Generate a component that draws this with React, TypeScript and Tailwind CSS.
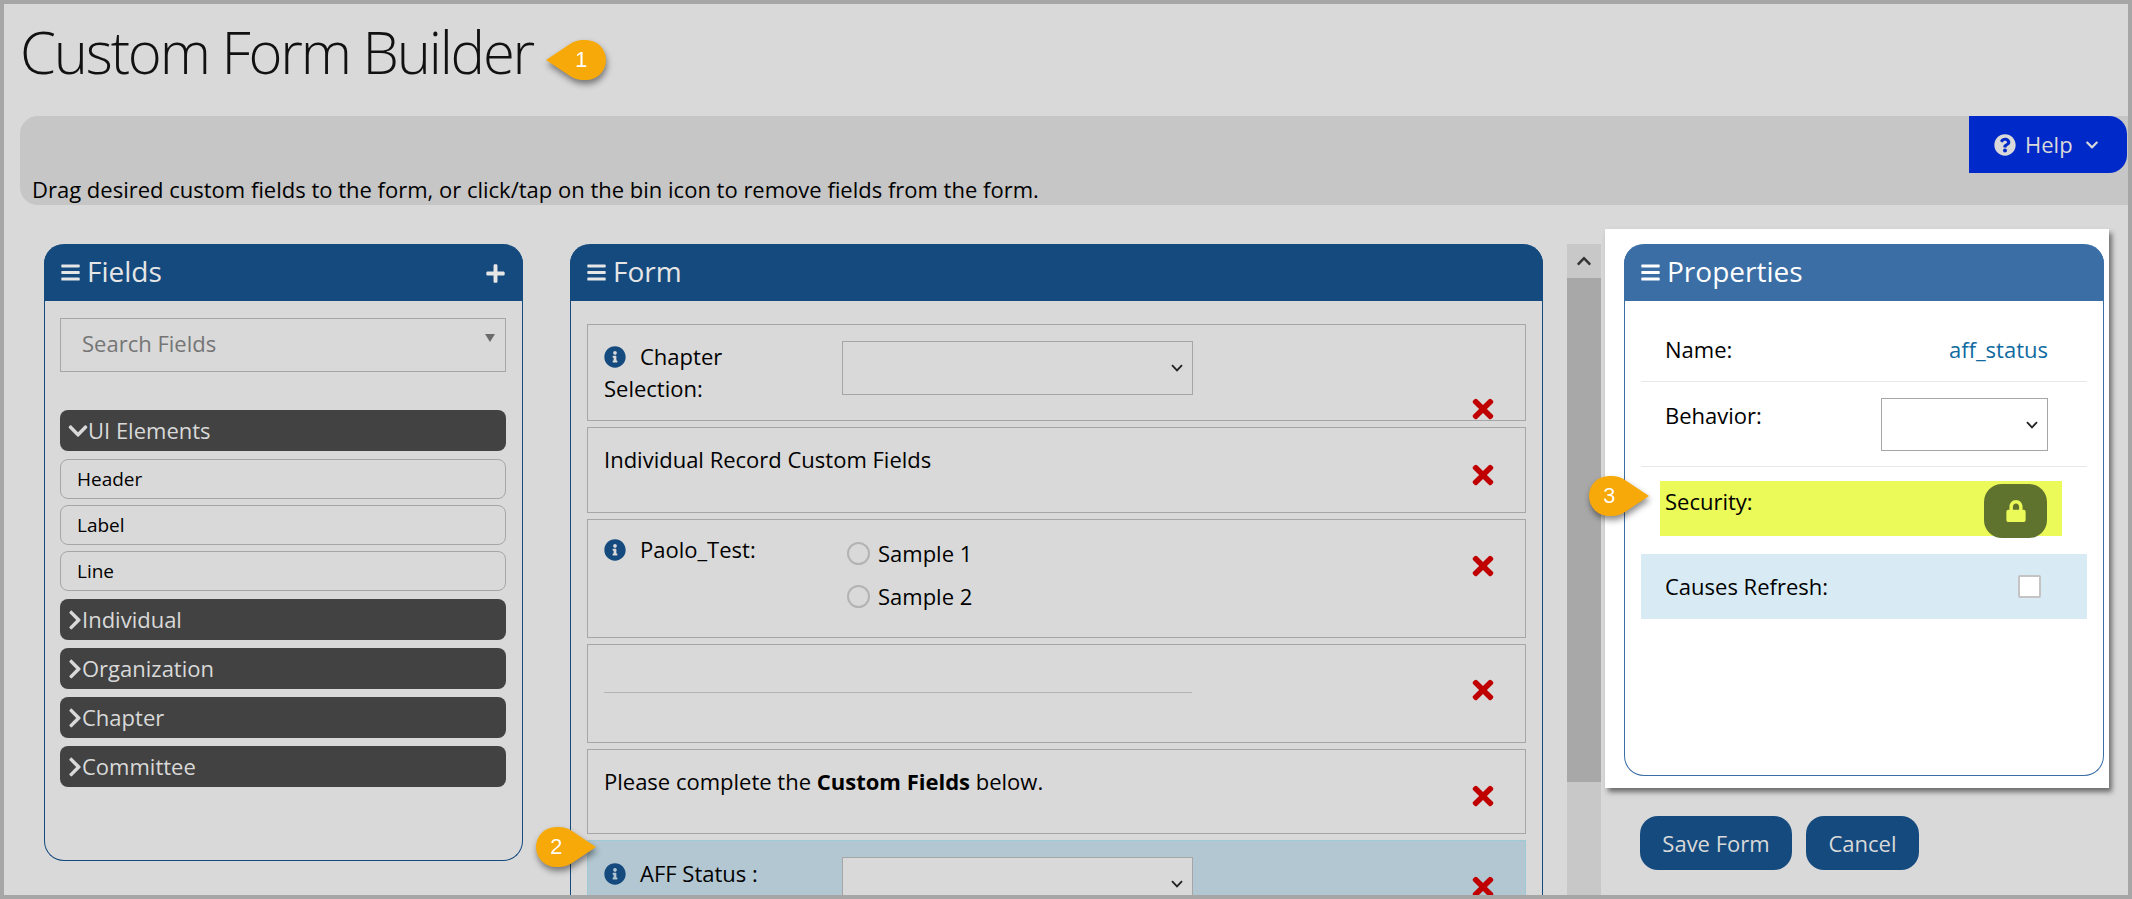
import { FaBars, FaPlus, FaInfoCircle, FaTimes, FaChevronDown, FaChevronRight, FaChevronUp, FaQuestionCircle, FaLock } from "react-icons/fa";
import type { ReactNode } from "react";

const Badge = ({ n, flip, className }: { n: string; flip?: boolean; className: string }) => (
  <div className={`absolute w-[61px] h-[40px] drop-shadow-[1px_4px_3px_rgba(0,0,0,0.45)] ${className}`}>
    <svg viewBox="0 0 61 40" className={`w-full h-full ${flip ? "-scale-x-100" : ""}`}>
      <path d="M1 20 L25 4 Q31 0 38 0 H41 A20 20 0 0 1 41 40 H38 Q31 40 25 36 Z" fill="#f8a90a" />
    </svg>
    <span className={`absolute top-0 h-[40px] leading-[40px] text-white text-[22px] font-['Liberation_Sans',sans-serif] ${flip ? "left-[14px]" : "left-[30px]"}`}>
      {n}
    </span>
  </div>
);

const PanelHeader = ({ title, bg, children }: { title: string; bg: string; children?: ReactNode }) => (
  <div className={`h-[57px] rounded-t-[20px] flex items-center pl-[17px] pr-[17px] text-[#e6e6e6] ${bg}`}>
    <FaBars className="w-[19px] h-[21px] mr-[7px]" />
    <span className="text-[28px] leading-none -mt-[3px]">{title}</span>
    {children}
  </div>
);

const DarkRow = ({ label, open }: { label: string; open?: boolean }) => (
  <div className="h-[41px] rounded-[8px] bg-[#424242] text-[#d9d9d9] flex items-center pl-[8px] text-[22px]">
    {open ? (
      <FaChevronDown className="w-[20px] h-[22px] shrink-0" />
    ) : (
      <FaChevronRight className="w-[14px] h-[22px] shrink-0" />
    )}
    <span>{label}</span>
  </div>
);

const LightRow = ({ label }: { label: string }) => (
  <div className="h-[40px] rounded-[8px] border border-[#a6a6a6] flex items-center pl-[16px] text-[19px] text-black">
    {label}
  </div>
);

const Row = ({ h, x, blue, children }: { h: string; x: string; blue?: boolean; children: ReactNode }) => (
  <div className={`${h} shrink-0 flex border ${blue ? "bg-[#b2c7d1] border-[#9fc9d4]" : "border-[#a6a6a6]"} pl-[16px] text-[22px] text-black`}>
    <div className="flex-1 min-w-0">{children}</div>
    <FaTimes className={`w-[30px] h-[30px] text-[#c00000] mr-[27px] ${x}`} />
  </div>
);

const Info = () => <FaInfoCircle className="inline-block w-[22px] h-[22px] text-[#154a7e] mr-[14px] align-[-3px]" />;

const Select = ({ className }: { className: string }) => (
  <div className={`relative border border-[#a6a6a6] ${className}`}>
    <select className="appearance-none w-full h-full bg-transparent">
      <option></option>
    </select>
    <svg viewBox="0 0 12 8" className="absolute right-[9px] top-[22px] w-[12px] h-[8px] text-[#222]" fill="none" stroke="currentColor" strokeWidth="1.8">
      <path d="M1 1.2 L6 6.4 L11 1.2" />
    </svg>
  </div>
);

const Radio = ({ label }: { label: string }) => (
  <label className="flex items-center h-[43px]">
    <input type="radio" className="appearance-none w-[23px] h-[23px] rounded-full border-2 border-[#b3b3b3] mr-[8px]" />
    {label}
  </label>
);

const App = () => {
  return (
    <div className="relative w-[2132px] h-[899px] overflow-hidden border-4 border-[#a6a6a6] bg-[#d9d9d9] font-['Open_Sans',sans-serif]">
      <h1 className="h-[112px] pl-[16px] pt-[10px] text-[58px] leading-[76px] tracking-[-2.2px] font-light text-[#111]">Custom Form Builder</h1>

      <div className="h-[89px] ml-[16px] rounded-l-[18px] bg-[#c6c6c6] flex flex-col">
        <div className="flex justify-end pr-[1px]">
          <button className="w-[158px] h-[57px] rounded-r-[18px] bg-[#0029c9] text-[#d9d9d9] text-[22px] flex items-center pl-[25px]">
            <FaQuestionCircle className="w-[22px] h-[22px] mr-[9px]" />
            Help
            <FaChevronDown className="w-[14px] h-[14px] ml-[12px]" />
          </button>
        </div>
        <p className="pl-[12px] pt-[3px] text-[22px] leading-[27px] text-black">
          Drag desired custom fields to the form, or click/tap on the bin icon to remove fields from the form.
        </p>
      </div>

      <div className="flex pl-[40px] pt-[39px]">
        {/* Fields */}
        <div className="w-[479px] h-[617px] shrink-0 border border-t-0 border-[#154a7e] rounded-[20px] flex flex-col">
          <div className="-mx-px">
            <PanelHeader title="Fields" bg="bg-[#154a7e]">
              <FaPlus className="w-[21px] h-[21px] ml-auto mt-[2px]" />
            </PanelHeader>
          </div>
          <div className="pl-[15px] pr-[16px] pt-[17px] flex flex-col">
            <div className="relative h-[54px] border border-[#a6a6a6] flex items-center pl-[21px] pb-[3px] text-[22px] text-[#757575] mb-[38px]">
              Search Fields
              <span className="absolute right-[10px] top-[15px] w-0 h-0 border-x-[5px] border-x-transparent border-t-[8px] border-t-[#6b6b6b]"></span>
            </div>
            <DarkRow label="UI Elements" open />
            <div className="flex flex-col gap-[6px] mt-[8px] mb-[8px]">
              <LightRow label="Header" />
              <LightRow label="Label" />
              <LightRow label="Line" />
            </div>
            <div className="flex flex-col gap-[8px]">
              <DarkRow label="Individual" />
              <DarkRow label="Organization" />
              <DarkRow label="Chapter" />
              <DarkRow label="Committee" />
            </div>
          </div>
        </div>

        {/* Form */}
        <div className="w-[973px] h-[660px] shrink-0 ml-[47px] border-x border-[#154a7e] rounded-t-[20px]">
          <div className="-mx-px">
            <PanelHeader title="Form" bg="bg-[#154a7e]" />
          </div>
          <div className="pl-[16px] pr-[16px] pt-[23px] flex flex-col gap-[6px] h-[594px] overflow-hidden">
            <Row h="h-[97px]" x="mt-[69px]">
              <div className="flex pt-[16px]">
                <div className="w-[238px] leading-[32px] -mt-[1px]">
                  <Info />Chapter
                  <br />
                  Selection:
                </div>
                <Select className="w-[351px] h-[54px]" />
              </div>
            </Row>
            <Row h="h-[86px]" x="mt-[32px]">
              <div className="pt-[18px] leading-[27px]">Individual Record Custom Fields</div>
            </Row>
            <Row h="h-[119px]" x="mt-[31px]">
              <div className="flex pt-[12px]">
                <div className="w-[243px] leading-[32px] pt-[1px]">
                  <Info />Paolo_Test:
                </div>
                <div className="flex flex-col">
                  <Radio label="Sample 1" />
                  <Radio label="Sample 2" />
                </div>
              </div>
            </Row>
            <Row h="h-[99px]" x="mt-[30px]">
              <div className="w-[588px] border-b border-[#b3b3b3] h-[48px]"></div>
            </Row>
            <Row h="h-[85px]" x="mt-[31px]">
              <div className="pt-[18px] leading-[27px]">
                Please complete the <b>Custom Fields</b> below.
              </div>
            </Row>
            <Row h="h-[90px]" x="mt-[31px]" blue>
              <div className="flex pt-[16px]">
                <div className="w-[238px] leading-[32px]">
                  <Info />AFF Status :
                </div>
                <Select className="w-[351px] h-[54px] bg-[#d9d9d9]" />
              </div>
            </Row>
          </div>
        </div>

        {/* Scrollbar */}
        <div className="w-[34px] h-[651px] shrink-0 ml-[24px] bg-[#c8c8c8] flex flex-col">
          <div className="h-[34px] flex items-center justify-center">
            <FaChevronUp className="w-[16px] h-[16px] text-[#333]" />
          </div>
          <div className="h-[504px] bg-[#a8a8a8]"></div>
        </div>

        {/* Properties */}
        <div className="w-[504px] shrink-0 ml-[4px] -mt-[15px]">
          <div className="h-[559px] bg-white pt-[15px] pl-[19px] pr-[5px] shadow-[3px_4px_5px_rgba(0,0,0,0.5)]">
            <div className="h-[532px] border border-t-0 border-[#3a6ea5] rounded-[20px]">
              <div className="-mx-px">
                <PanelHeader title="Properties" bg="bg-[#3a6ea5] text-white" />
              </div>
              <div className="px-[16px] text-[22px] text-black">
                <div className="h-[81px] flex justify-between items-center pl-[24px] pr-[39px] pt-[17px] border-b border-[#e8e8e8]">
                  <span>Name:</span>
                  <span className="text-[#0f6aa0]">aff_status</span>
                </div>
                <div className="h-[85px] flex justify-between pl-[24px] pr-[39px] pt-[16px] border-b border-[#e8e8e8]">
                  <span className="leading-[34px]">Behavior:</span>
                  <Select className="w-[167px] h-[53px] bg-white" />
                </div>
                <div className="relative h-[55px] mt-[14px] ml-[19px] mr-[25px] bg-[#ebfa58] flex pl-[5px]">
                  <span className="leading-[34px] pt-[3px]">Security:</span>
                  <div className="absolute right-[15px] top-[3px] w-[63px] h-[54px] rounded-[18px] bg-[#5f732f] flex items-center justify-center">
                    <FaLock className="w-[20px] h-[22px] text-[#ebfa58]" />
                  </div>
                </div>
                <div className="h-[65px] mt-[18px] bg-[#d8ebf4] flex items-center justify-between pl-[24px] pr-[46px]">
                  <span>Causes Refresh:</span>
                  <input type="checkbox" className="appearance-none w-[23px] h-[23px] bg-white border-2 border-[#c4c4c4] rounded-[2px]" />
                </div>
              </div>
            </div>
          </div>
          <div className="flex gap-[14px] pl-[35px] mt-[28px] text-[22px] text-[#d9d9d9]">
            <button className="w-[152px] h-[54px] rounded-[18px] bg-[#154a7e]">Save Form</button>
            <button className="w-[113px] h-[54px] rounded-[18px] bg-[#154a7e]">Cancel</button>
          </div>
        </div>
      </div>

      <Badge n="1" className="left-[541px] top-[36px]" />
      <Badge n="2" flip className="left-[532px] top-[823px]" />
      <Badge n="3" flip className="left-[1585px] top-[472px]" />
    </div>
  );
};

export default App;
